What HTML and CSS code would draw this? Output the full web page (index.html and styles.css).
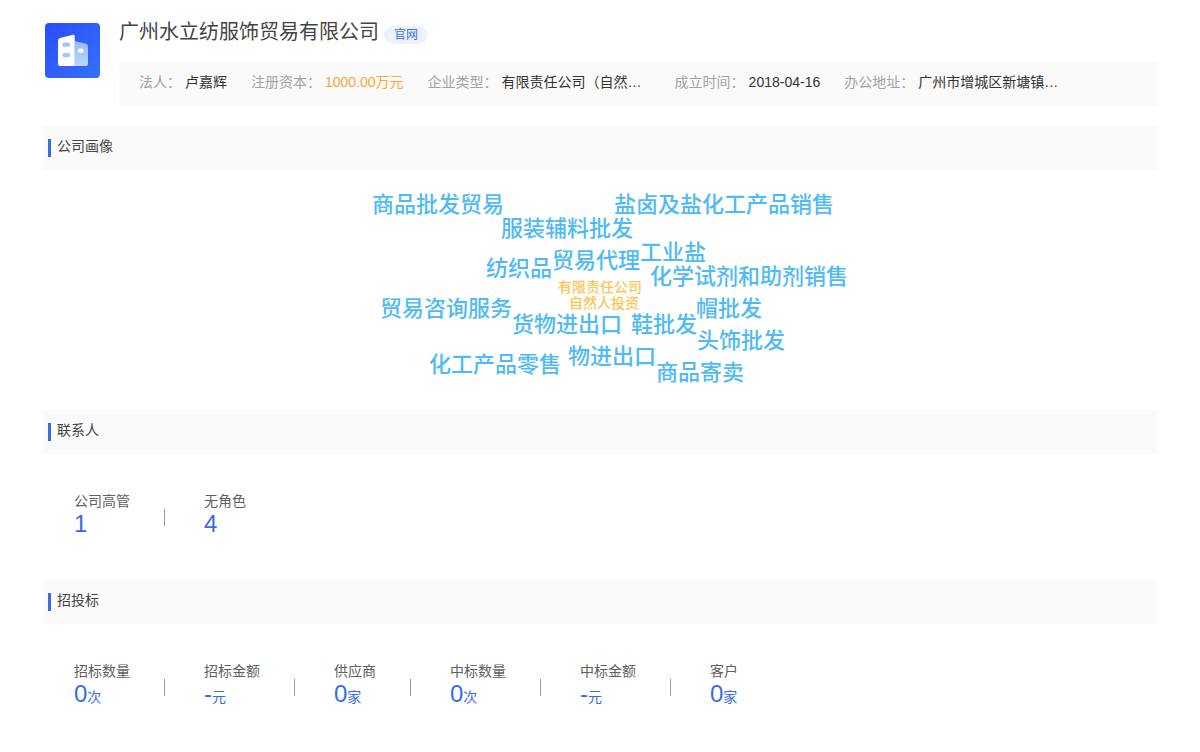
FILE: index.html
```html
<!DOCTYPE html>
<html lang="zh-CN">
<head>
<meta charset="utf-8">
<title>广州水立纺服饰贸易有限公司</title>
<meta name="viewport" content="width=device-width, initial-scale=1">
<link rel="stylesheet" href="styles.css">
</head>
<body>
<main class="page">
  <header class="company">
    <svg class="logo" viewBox="0 0 55 55" aria-hidden="true">
      <defs>
        <linearGradient id="logo-bg" x1="0" y1="0" x2="1" y2="1">
          <stop offset="0" stop-color="#2b4efa"/>
          <stop offset="1" stop-color="#3570fb"/>
        </linearGradient>
        <linearGradient id="logo-side" x1="0" y1="0" x2="0" y2="1">
          <stop offset="0" stop-color="#8fbdfb"/>
          <stop offset="1" stop-color="#b9d8fd"/>
        </linearGradient>
      </defs>
      <rect width="55" height="55" rx="4" fill="url(#logo-bg)"/>
      <path d="M29.500 18L41 20.800Q43 21.500 43 23.500V41Q43 43 41 43H29.500Z" fill="url(#logo-side)"/>
      <path d="M15 15L28 11.800Q29.700 11.500 29.700 13.200V43H15Q13 43 13 41V17.500Q13 15.500 15 15Z" fill="#fff"/>
      <rect x="17.200" y="19.600" width="8" height="4.200" rx="2.100" fill="#9fc5fb"/>
      <rect x="17.200" y="30" width="8" height="4.200" rx="2.100" fill="#9fc5fb"/>
      <rect x="32.800" y="25.600" width="5.800" height="4.200" rx="2.100" fill="#fff"/>
    </svg>
    <div class="company-body">
      <div class="title-row">
        <h1 class="name">广州水立纺服饰贸易有限公司</h1>
        <a class="site" href="#">官网</a>
      </div>
      <dl class="facts">
        <div class="fact"><dt>法人：</dt><dd>卢嘉辉</dd></div>
        <div class="fact"><dt>注册资本：</dt><dd class="money">1000.00万元</dd></div>
        <div class="fact"><dt>企业类型：</dt><dd class="wide">有限责任公司（自然…</dd></div>
        <div class="fact"><dt>成立时间：</dt><dd>2018-04-16</dd></div>
        <div class="fact"><dt>办公地址：</dt><dd class="wide">广州市增城区新塘镇…</dd></div>
      </dl>
    </div>
  </header>

  <section>
    <h2 class="section-title"><span>公司画像</span></h2>
    <div class="cloud">
      <span class="word w1">商品批发贸易</span>
      <span class="word w2">盐卤及盐化工产品销售</span>
      <span class="word w3">服装辅料批发</span>
      <span class="word w4">工业盐</span>
      <span class="word w5">贸易代理</span>
      <span class="word w6">纺织品</span>
      <span class="word w7">化学试剂和助剂销售</span>
      <span class="word core w8">有限责任公司</span>
      <span class="word core w9">自然人投资</span>
      <span class="word w10">贸易咨询服务</span>
      <span class="word w11">帽批发</span>
      <span class="word w12">货物进出口</span>
      <span class="word w13">鞋批发</span>
      <span class="word w14">头饰批发</span>
      <span class="word w15">物进出口</span>
      <span class="word w16">化工产品零售</span>
      <span class="word w17">商品寄卖</span>
    </div>
  </section>

  <section>
    <h2 class="section-title"><span>联系人</span></h2>
    <dl class="stats">
      <div class="stat"><dt>公司高管</dt><dd>1</dd></div>
      <div class="stat"><dt>无角色</dt><dd>4</dd></div>
    </dl>
  </section>

  <section>
    <h2 class="section-title"><span>招投标</span></h2>
    <dl class="stats">
      <div class="stat"><dt>招标数量</dt><dd>0<small>次</small></dd></div>
      <div class="stat"><dt>招标金额</dt><dd>-<small>元</small></dd></div>
      <div class="stat"><dt>供应商</dt><dd>0<small>家</small></dd></div>
      <div class="stat"><dt>中标数量</dt><dd>0<small>次</small></dd></div>
      <div class="stat"><dt>中标金额</dt><dd>-<small>元</small></dd></div>
      <div class="stat"><dt>客户</dt><dd>0<small>家</small></dd></div>
    </dl>
  </section>
</main>
</body>
</html>
```
FILE: styles.css
```css
* { box-sizing: border-box; }

body {
  margin: 0;
  background: #fff;
  color: #444;
  font: 14px/20px "Liberation Sans", "Noto Sans CJK SC", sans-serif;
}

h1, h2, dl, dd { margin: 0; font-weight: 400; }

.page { padding: 16px 44px 0; }

.company { display: flex; gap: 19px; margin-bottom: 20px; }
.logo { flex: none; width: 55px; height: 55px; margin: 7px 0 0 1px; }
.company-body { flex: 1; min-width: 0; }

.title-row { display: flex; align-items: flex-start; gap: 5px; height: 46px; }
.name { font-size: 20px; line-height: 32px; }
.site {
  margin-top: 10px;
  padding: 0 10px;
  border-radius: 9px;
  background: #edf3fe;
  color: #3a6eea;
  font-size: 12px;
  line-height: 18px;
  text-decoration: none;
}

.facts {
  display: flex;
  gap: 24px;
  padding: 10px 20px 14px;
  background: #fafafa;
  white-space: nowrap;
}
.fact { display: flex; gap: 4px; }
.fact dt { color: #a3a3a3; }
.fact dd { color: #333; }
.fact .money { color: #f5a937; }
.fact .wide { min-width: 149px; }

.section-title {
  display: flex;
  align-items: flex-start;
  gap: 6px;
  height: 44px;
  padding: 10px 4px;
  background: #fafafa;
  font-size: 14px;
}
.section-title::before {
  content: "";
  width: 3px;
  height: 18px;
  margin-top: 3px;
  background: #3a6bea;
}

/* Words are placed freely around the centre of the cloud. */
.cloud { position: relative; width: 480px; height: 240px; margin: 0 auto; }
.word {
  position: absolute;
  color: #4fbaf5;
  font-size: 22px;
  font-weight: 500;
  line-height: 26px;
  white-space: nowrap;
}
.core { color: #fac552; font-size: 14px; line-height: 16px; }
.w1 { left: 12px; top: 22px; }
.w2 { left: 254px; top: 22px; }
.w3 { left: 141px; top: 46px; }
.w4 { left: 280px; top: 70px; }
.w5 { left: 192px; top: 78px; }
.w6 { left: 126px; top: 86px; }
.w7 { left: 290px; top: 94px; }
.w8 { left: 198px; top: 109px; }
.w9 { left: 209px; top: 125px; }
.w10 { left: 20px; top: 126px; }
.w11 { left: 336px; top: 126px; }
.w12 { left: 152px; top: 142px; }
.w13 { left: 271px; top: 142px; }
.w14 { left: 337px; top: 158px; }
.w15 { left: 208px; top: 174px; }
.w16 { left: 69px; top: 182px; }
.w17 { left: 296px; top: 190px; }

.stats { display: flex; padding: 36px 30px 44px; }
.stat { display: flex; flex-direction: column; position: relative; }
.stat + .stat { margin-left: 74px; }
.stat + .stat::before {
  content: "";
  position: absolute;
  left: -40px;
  top: 19px;
  width: 1px;
  height: 17px;
  background: #999;
}
.stat dt { color: #606060; line-height: 22px; }
.stat dd { color: #3a6bea; font-size: 24px; line-height: 24px; }
.stat small { font-size: 14px; }
```
